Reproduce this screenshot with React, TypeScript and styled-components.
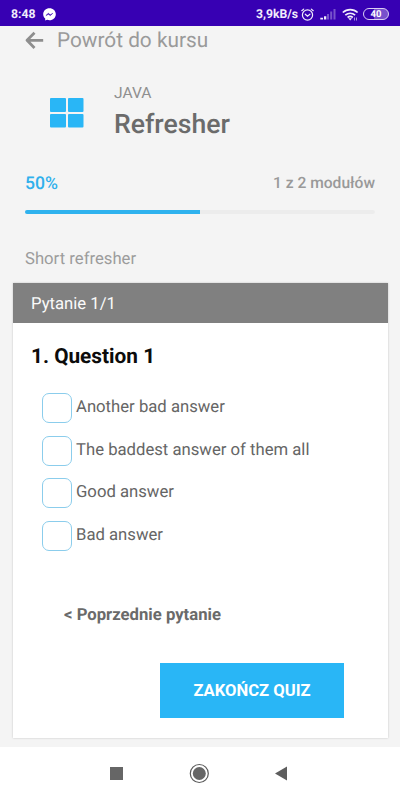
import React from 'react';
import styled, { createGlobalStyle } from 'styled-components';

const GlobalStyle = createGlobalStyle`
  * { box-sizing: border-box; }
  body { margin: 0; background: #f4f4f4; font-family: Roboto, 'Liberation Sans', sans-serif; text-rendering: geometricPrecision; }
`;

const Screen = styled.div`
  display: flex;
  flex-direction: column;
  width: 400px;
  height: 800px;
  overflow: hidden;
  background: #f4f4f4;
`;

const StatusBar = styled.header`
  display: flex;
  align-items: center;
  justify-content: space-between;
  flex: none;
  height: 26px;
  padding: 2px 11px 0 11px;
  background: #3700b3;
  color: #f1ecfb;
`;

const StatusGroup = styled.div`
  display: flex;
  align-items: center;
`;

const StatusText = styled.span<{ $gap: number }>`
  margin-right: ${(p) => p.$gap}px;
  font-size: 12.2px;
  font-weight: 700;
  line-height: 14px;
`;

const Content = styled.main`
  display: flex;
  flex-direction: column;
  flex: 1;
  padding: 0 12px;
`;

const BackLink = styled.a`
  display: flex;
  align-items: center;
  height: 28px;
  padding-left: 13px;
  color: #9a9a9a;
  font-size: 20.8px;
  line-height: 28px;
  svg { margin-right: 13px; }
`;

const BackLabel = styled.span`
  padding-top: 2px;
`;

const Course = styled.section`
  display: flex;
  align-items: center;
  height: 60px;
  margin-top: 28px;
  padding-left: 38px;
  > svg { margin-top: 2px; }
`;

const CourseNames = styled.div`
  display: flex;
  flex-direction: column;
  margin: 0 0 0 30px;
`;

const Category = styled.span`
  color: #8f8f8f;
  font-size: 15.6px;
  line-height: 22px;
`;

const CourseTitle = styled.h1`
  margin: 3px 0 0;
  color: #6b6b6b;
  font-size: 26.6px;
  font-weight: 500;
  line-height: 36px;
`;

const ProgressLabels = styled.div`
  display: flex;
  justify-content: space-between;
  height: 24px;
  margin-top: 30px;
  padding: 0 13px;
  font-weight: 500;
  line-height: 24px;
`;

const Percent = styled.span`
  color: #2fb0ec;
  font-size: 17.6px;
`;

const ModuleCount = styled.span`
  color: #999;
  font-size: 15.6px;
  line-height: 22px;
`;

const Track = styled.div`
  height: 4px;
  margin: 14px 13px 0;
  border-radius: 2px;
  background: #ececec;
`;

const Fill = styled.div`
  width: 50%;
  height: 100%;
  border-radius: 2px 0 0 2px;
  background: #2fb2ee;
`;

const LessonName = styled.p`
  margin: 36px 13px 0;
  color: #9c9c9c;
  font-size: 16.7px;
  line-height: 20px;
`;

const QuizCard = styled.section`
  display: flex;
  flex-direction: column;
  height: 455px;
  margin: 13px 0 0 1px;
  background: #fff;
  box-shadow: 0 0 2px rgba(0, 0, 0, 0.2);
`;

const QuizHeader = styled.div`
  height: 40px;
  padding: 2px 0 0 18px;
  background: #808080;
  color: #fafafa;
  font-size: 16.7px;
  line-height: 39px;
`;

const Question = styled.h2`
  margin: 21px 18px 0;
  color: #0c0c0c;
  font-size: 20.8px;
  font-weight: 700;
  line-height: 26px;
`;

const Answers = styled.div`
  display: flex;
  flex-direction: column;
  gap: 12.8px;
  margin: 22.8px 0 0 29px;
`;

const Answer = styled.label`
  display: flex;
  height: 30px;
  color: #656565;
  font-size: 16.7px;
  line-height: 30px;
`;

const Checkbox = styled.input`
  appearance: none;
  width: 30px;
  height: 30px;
  margin: 0 4px 0 0;
  border: 1px solid #8bcdec;
  border-radius: 7px;
  background: #fff;
`;

const PreviousLink = styled.a`
  margin: 54.8px 0 0 51px;
  color: #6a6a6a;
  font-size: 16.7px;
  font-weight: 700;
  line-height: 20px;
`;

const FinishButton = styled.button`
  align-self: flex-end;
  width: 184px;
  height: 55px;
  margin: 37px 44px 0 0;
  padding: 0;
  border: 0;
  background: #29b6f6;
  color: #fff;
  font-family: inherit;
  font-size: 16.6px;
  font-weight: 700;
`;

const NavBar = styled.nav`
  display: flex;
  flex: none;
  justify-content: space-between;
  height: 53px;
  padding: 16px 112px 0 110px;
  background: #fff;
`;

const answers = ['Another bad answer', 'The baddest answer of them all', 'Good answer', 'Bad answer'];

const MessengerIcon = () => (
  <svg width="13" height="13" viewBox="0 0 13 13">
    <path d="M6.5.2C2.9.2.2 2.8.2 6.2c0 1.8.8 3.3 2 4.4v2l1.9-.8c.8.2 1.6.4 2.4.4 3.6 0 6.3-2.6 6.3-6S10.1.2 6.5.2Z" fill="#fff" />
    <path d="m2.9 7.6 2.4-2.3 2 1.5 2.5-1.5-2.5 2.3-2-1.3Z" fill="#3700b3" stroke="#3700b3" strokeWidth=".5" />
  </svg>
);

const AlarmIcon = () => (
  <svg width="13" height="13" viewBox="0 0 13 13" fill="none" stroke="currentColor" strokeLinecap="round">
    <circle cx="6.5" cy="7" r="5.1" strokeWidth="1.2" />
    <path d="M.8 2.7 2.7 1.1M12.2 2.7 10.3 1.1M4.3 6.2l2.2 2 2.4-2" strokeWidth="1.2" />
  </svg>
);

const SignalIcon = () => (
  <svg width="16" height="12" viewBox="0 0 16 12" fill="currentColor">
    <path d="M.3 9.8h2.7v1.7H.3zM4 8.2h2.3v3.3H4z" />
    <path d="M7 6h2v5.5H7zM10.2 3.5h2v8h-2zM13.5.9h2v10.6h-2z" opacity=".35" />
  </svg>
);

const WifiIcon = () => (
  <svg width="17" height="13" viewBox="0 0 17 13" fill="none" stroke="currentColor" strokeWidth="1.7">
    <path d="M.8 4.5c4.2-3.9 10.6-3.9 14.8 0M3.3 7.2c2.9-2.6 6.9-2.6 9.8 0M5.6 9.5c1.6-1.3 3.6-1.3 5.2 0" />
    <path d="m6.3 10.3 1.9 2.2 1.9-2.2Z" fill="currentColor" stroke="none" />
    <path d="M12.5 9.5v3M14.5 9.5v3" strokeWidth=".9" opacity=".7" />
  </svg>
);

const Battery = styled.span`
  width: 26px;
  height: 12px;
  margin-left: 4px;
  border: 1px solid #d9cef3;
  border-radius: 6px;
  background: linear-gradient(90deg, #3700b3 42%, #7850cc 42%);
  color: #fff;
  font-size: 9.5px;
  font-weight: 700;
  line-height: 11px;
  text-align: center;
`;

const Spacer = styled.span`
  width: 6px;
`;

export default function App() {
  return (
    <Screen>
      <GlobalStyle />
      <StatusBar>
        <StatusGroup>
          <StatusText $gap={8}>8:48</StatusText>
          <MessengerIcon />
        </StatusGroup>
        <StatusGroup>
          <StatusText $gap={3}>3,9kB/s</StatusText>
          <AlarmIcon />
          <Spacer />
          <SignalIcon />
          <Spacer />
          <WifiIcon />
          <Battery>40</Battery>
        </StatusGroup>
      </StatusBar>
      <Content>
        <BackLink>
          <svg width="19" height="18" viewBox="0 0 19 18" fill="none" stroke="#8e8e8e" strokeWidth="2.8" strokeLinejoin="round">
            <path d="M18.2 9.3H2.5M9.5 1.7 2 9.3l7.5 7.6" />
          </svg>
          <BackLabel>Powrót do kursu</BackLabel>
        </BackLink>
        <Course>
          <svg width="34" height="30" viewBox="0 0 34 30" fill="#29b6f6">
            <rect x="0" y="0" width="16" height="14" rx="1" />
            <rect x="18" y="0" width="15.5" height="14" rx="1" />
            <rect x="0" y="16" width="16" height="13.5" rx="1" />
            <rect x="18" y="16" width="15.5" height="13.5" rx="1" />
          </svg>
          <CourseNames>
            <Category>JAVA</Category>
            <CourseTitle>Refresher</CourseTitle>
          </CourseNames>
        </Course>
        <ProgressLabels>
          <Percent>50%</Percent>
          <ModuleCount>1 z 2 modułów</ModuleCount>
        </ProgressLabels>
        <Track>
          <Fill />
        </Track>
        <LessonName>Short refresher</LessonName>
        <QuizCard>
          <QuizHeader>Pytanie 1/1</QuizHeader>
          <Question>1. Question 1</Question>
          <Answers>
            {answers.map((text) => (
              <Answer key={text}>
                <Checkbox type="checkbox" />
                {text}
              </Answer>
            ))}
          </Answers>
          <PreviousLink>&lt; Poprzednie pytanie</PreviousLink>
          <FinishButton>ZAKOŃCZ QUIZ</FinishButton>
        </QuizCard>
      </Content>
      <NavBar>
        <svg width="13" height="21" viewBox="0 0 13 21">
          <rect y="4" width="13" height="13" fill="#666" />
        </svg>
        <svg width="20" height="21" viewBox="0 0 20 21">
          <circle cx="10.3" cy="10.5" r="9" fill="none" stroke="#5a5a5a" strokeWidth="1.2" />
          <circle cx="10.3" cy="10.5" r="6.5" fill="#666" />
        </svg>
        <svg width="13" height="21" viewBox="0 0 13 21">
          <path d="M12 3.5v14L0 10.5Z" fill="#5e5e5e" />
        </svg>
      </NavBar>
    </Screen>
  );
}
